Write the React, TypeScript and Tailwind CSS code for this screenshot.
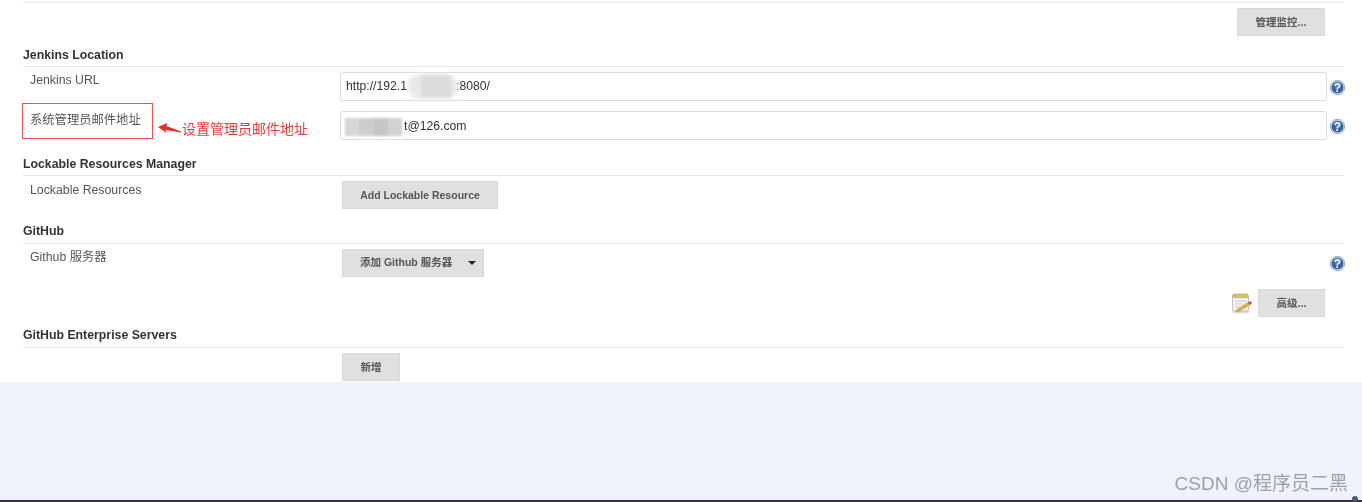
const sans = "font-['Liberation_Sans','Noto_Sans_CJK_SC',sans-serif]";

function HelpIcon() {
  return (
    <svg width="15" height="15" viewBox="0 0 15 15" className="shrink-0">
      <defs>
        <radialGradient id="helpFill" cx="50%" cy="40%" r="60%">
          <stop offset="0%" stopColor="#5f86bd" />
          <stop offset="100%" stopColor="#1f4f8f" />
        </radialGradient>
      </defs>
      <circle cx="7.5" cy="7.5" r="7.2" fill="#c3d2e6" stroke="#7f9cc4" strokeWidth="0.8" />
      <circle cx="7.5" cy="7.5" r="5.8" fill="url(#helpFill)" />
      <text x="7.5" y="11.8" textAnchor="middle" fontSize="12" fontWeight="700" fontFamily="Liberation Sans" fill="#fff">
        ?
      </text>
    </svg>
  );
}

function NotepadIcon() {
  return (
    <svg width="22" height="21" viewBox="0 0 22 21" className="shrink-0">
      <ellipse cx="10" cy="19" rx="9" ry="1.6" fill="#ddd" />
      <rect x="1.5" y="2" width="16" height="16" rx="1.5" fill="#f4f4f0" stroke="#b5b5b0" strokeWidth="0.8" />
      <rect x="2" y="1" width="15" height="3.5" rx="1" fill="#d8c268" stroke="#a8913c" strokeWidth="0.5" />
      <path d="M4 8h11M4 11h8M4 14h5" stroke="#c8c8c8" strokeWidth="0.9" />
      <path d="M6 16.5l11-7 2 2.4-10.8 6.3-3 .6z" fill="#e2b13c" stroke="#a87a1c" strokeWidth="0.4" />
      <path d="M17 9.5l2.6-1.4 1.2 2.4-1.8 1.4z" fill="#d9433a" />
    </svg>
  );
}

function GrayButton({ children, className = "" }: { children: React.ReactNode; className?: string }) {
  return (
    <button className={`flex h-[28px] items-center justify-center border border-[#d8d8d8] bg-[#e0e0e0] pt-[1px] text-[10.5px] font-bold text-[#555] ${className}`}>
      {children}
    </button>
  );
}

function SectionHeader({ title, className = "" }: { title: string; className?: string }) {
  return (
    <div className={`mr-[18px] flex h-[17px] items-center text-[12.3px] font-bold text-[#333] ${className}`}>
      {title}
    </div>
  );
}

function Rule() {
  return <div className="mr-[18px] h-[1px] bg-[#e6e6e6]" />;
}

function TextRow({ label, children, className = "", labelClass = "", boxClass = "" }: { label: string; children: React.ReactNode; className?: string; labelClass?: string; boxClass?: string }) {
  return (
    <div className={`flex items-start ${className}`}>
      <div className={`w-[317px] shrink-0 pl-[7px] text-[12.3px] leading-[16px] text-[#555] ${labelClass}`}>{label}</div>
      <div className={`relative h-[29px] w-[987px] shrink-0 rounded-[3px] border border-[#dcdcdc] bg-white pl-[5px] text-[12.2px] leading-[26px] text-[#333] ${boxClass}`}>
        {children}
      </div>
      <div className="ml-[3px] mt-[8px]">
        <HelpIcon />
      </div>
    </div>
  );
}

export default function App() {
  return (
    <div className={`relative h-[502px] w-[1362px] overflow-hidden bg-[#eef2fa] blur-[0.35px] ${sans}`}>
      <div className="relative h-[382px] bg-white pl-[23px] pt-[1px]">
        <div className="mr-[18px] h-[2px] bg-[#f0f0f0]" />

        <div className="mr-[37px] mt-[5px] flex justify-end">
          <GrayButton className="w-[88px]">管理监控...</GrayButton>
        </div>

        <SectionHeader title="Jenkins Location" className="mt-[11px]" />
        <div className="mt-[2px]">
          <Rule />
        </div>
        <TextRow label="Jenkins URL" className="mt-[5px]">
          http://192.1
          <span className="ml-[49px]">:8080/</span>
          <div className="absolute left-[67px] top-[1px] h-[25px] w-[50px] rounded-full bg-[#e8e8e8] blur-[2px]" />
          <div className="absolute left-[80px] top-[3px] h-[21px] w-[30px] bg-[#dcdcdc] blur-[1px]" />
        </TextRow>
        <TextRow label="系统管理员邮件地址" className="mt-[10px]" labelClass="pt-[1px]" boxClass="leading-[28px]">
          <span className="ml-[58px]">t@126.com</span>
          <div className="absolute left-[4px] top-[6px] flex h-[18px] w-[57px] blur-[1px]">
            <div className="flex-1 bg-[#d6d6d6]" />
            <div className="flex-1 bg-[#cdcdcd]" />
            <div className="flex-1 bg-[#c6c6c6]" />
            <div className="flex-1 bg-[#d2d2d2]" />
          </div>
        </TextRow>

        <SectionHeader title="Lockable Resources Manager" className="mt-[16px]" />
        <div className="mt-[2px]">
          <Rule />
        </div>
        <div className="mt-[5px] flex items-start">
          <div className="w-[319px] shrink-0 pl-[7px] pt-[1px] text-[12.3px] leading-[16px] text-[#555]">Lockable Resources</div>
          <GrayButton className="w-[156px]">Add Lockable Resource</GrayButton>
        </div>

        <SectionHeader title="GitHub" className="mt-[14px]" />
        <div className="mt-[3px]">
          <Rule />
        </div>
        <div className="mr-[17px] mt-[5px] flex items-start">
          <div className="w-[319px] shrink-0 pl-[7px] text-[12.3px] leading-[16px] text-[#555]">Github 服务器</div>
          <GrayButton className="w-[142px] justify-start gap-[16px] pb-[1px] pl-[17px] pt-0">
            <span>添加 Github 服务器</span>
            <span className="h-0 w-0 border-x-[4px] border-t-[4px] border-x-transparent border-t-[#222]" />
          </GrayButton>
          <div className="ml-auto mt-[7px]">
            <HelpIcon />
          </div>
        </div>
        <div className="mr-[37px] mt-[12px] flex items-center justify-end gap-[5px]">
          <NotepadIcon />
          <GrayButton className="w-[67px]">高级...</GrayButton>
        </div>

        <SectionHeader title="GitHub Enterprise Servers" className="mt-[10px]" />
        <div className="mt-[3px]">
          <Rule />
        </div>
        <div className="ml-[319px] mt-[5px]">
          <GrayButton className="w-[58px]">新增</GrayButton>
        </div>

        {/* red annotation over the label */}
        <div className="absolute left-[22px] top-[103px] h-[36px] w-[131px] border border-[#f25050]" />
        <svg width="24" height="12" viewBox="0 0 24 12" className="absolute left-[158px] top-[123px]">
          <path d="M0 4L9 0 8.5 3 23 8.5 23 9.5 7.5 7 8.5 10z" fill="#ee2a2a" />
        </svg>
        <div className="absolute left-[182px] top-[119px] text-[14px] leading-[20px] text-[#f23a3a]">设置管理员邮件地址</div>
      </div>

      <div className="absolute bottom-[6px] right-[14px] text-[19px] leading-[24px] text-[#a0a0a4]">CSDN @程序员二黑</div>
      <div className="absolute bottom-0 left-0 h-[2px] w-full bg-[#333]" />
      <div className="absolute bottom-0 left-[1352px] h-[6px] w-[6px] rounded-full bg-[#4a5a6a]" />
    </div>
  );
}
